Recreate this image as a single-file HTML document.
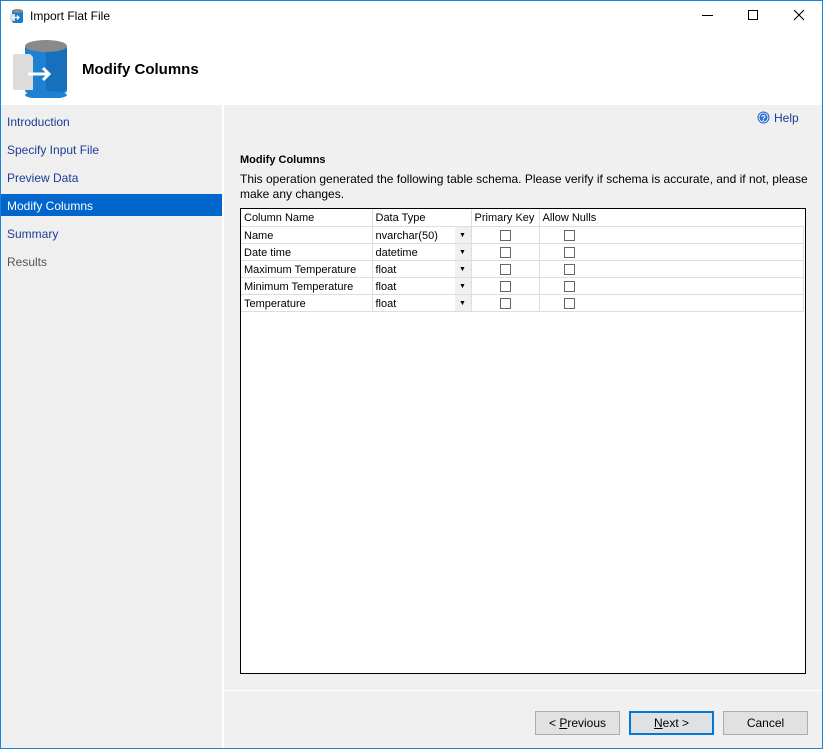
<!DOCTYPE html>
<html><head><style>
*{margin:0;padding:0;box-sizing:border-box}
body{width:823px;height:749px;position:relative;background:#fff;font-family:"Liberation Sans",sans-serif;font-size:12px;color:#000;overflow:hidden}
.win{position:absolute;left:0;top:0;width:823px;height:749px;border:1px solid #1883d7}
.abs{position:absolute}
.nav{left:1px;top:105px;width:221px;height:643px;background:#efefef}
.nav div{position:absolute;left:6px;color:#1e3c96;font-size:12px}
.main{left:224px;top:105px;width:598px;height:643px;background:#f0f0f0}
table{border-collapse:collapse;font-size:11px}
td{height:17px;border-right:1px solid #ddd;border-bottom:1px solid #ddd;padding:2px 3px 0;white-space:nowrap;background:#fff;vertical-align:middle;position:relative}
.cb{display:inline-block;width:11px;height:11px;border:1px solid #666;vertical-align:middle}
.dd{position:absolute;right:0;top:0;font-size:7px;width:16px;height:16px;background:#f0f0f0;text-align:center;line-height:17px}
.btn{position:absolute;top:711px;height:24px;border:1px solid #adadad;background:#e1e1e1;text-align:center;line-height:22px;font-size:12px}
</style></head><body>
<div class="win"></div>
<svg class="abs" style="left:9px;top:8px" width="16" height="16"><rect x="3" y="2" width="11" height="13" rx="2" fill="#1b7ccc"/><ellipse cx="8.5" cy="3" rx="5.5" ry="2" fill="#888"/><rect x="1" y="6" width="5" height="7" fill="#ddd"/><path d="M3 9.5h7M8 7.5l2 2-2 2" stroke="#fff" stroke-width="1.3" fill="none"/></svg>
<div class="abs" style="left:30px;top:9px;font-size:12px">Import Flat File</div>
<div class="abs" style="left:702px;top:15px;width:11px;height:1px;background:#000"></div>
<div class="abs" style="left:748px;top:10px;width:10px;height:10px;border:1px solid #000"></div>
<svg class="abs" style="left:793px;top:9px" width="12" height="12"><path d="M1 1L11 11M11 1L1 11" stroke="#000" stroke-width="1.1"/></svg>
<svg class="abs" style="left:10px;top:38px" width="60" height="60"><rect x="15" y="7" width="42" height="48" rx="3" fill="#1e80d0"/><path d="M36 10h21v42q-8 4-21 3z" fill="#1870bd"/><ellipse cx="36" cy="57" rx="21" ry="4" fill="#1e80d0"/><ellipse cx="36" cy="8" rx="21" ry="6" fill="#8a8a8a"/><path d="M3 16h17l3 3v33H3z" fill="#dcdcdc"/><path d="M18 36h21M33 30l6 6-6 6" stroke="#fff" stroke-width="3" fill="none"/></svg>
<div class="abs" style="left:82px;top:61px;font-size:15px;font-weight:bold">Modify Columns</div>
<div class="abs nav">
<div style="top:10px">Introduction</div>
<div style="top:38px">Specify Input File</div>
<div style="top:66px">Preview Data</div>
<div style="top:89px;left:0;width:221px;height:22px;background:#0066cc"></div>
<div style="top:94px;color:#fff">Modify Columns</div>
<div style="top:122px">Summary</div>
<div style="top:150px;color:#555">Results</div>
</div>
<div class="abs main"></div>
<div class="abs" style="left:224px;top:690px;width:598px;height:1px;background:#fff"></div>
<svg class="abs" style="left:757px;top:111px" width="13" height="13"><circle cx="6.5" cy="6.5" r="6" fill="#2a6fd0"/><circle cx="6.5" cy="6.5" r="4.5" fill="none" stroke="#fff" stroke-width="0.8"/><text x="6.5" y="10" font-size="8" font-weight="bold" fill="#fff" text-anchor="middle" font-family="Liberation Sans">?</text></svg>
<div class="abs" style="left:774px;top:111px;color:#1e3c96">Help</div>
<div class="abs" style="left:240px;top:154px;font-weight:bold;font-size:11px">Modify Columns</div>
<div class="abs" style="left:240px;top:172px;font-size:12px;line-height:15px;width:570px">This operation generated the following table schema. Please verify if schema is accurate, and if not, please make any changes.</div>
<div class="abs" style="left:240px;top:208px;width:566px;height:466px;border:1px solid #000;background:#fff">
<table>
<tr><td style="width:131px">Column Name</td><td style="width:99px">Data Type</td><td style="width:68px">Primary Key</td><td style="width:264px;border-right:none">Allow Nulls</td></tr>
<tr><td>Name</td><td>nvarchar(50)<span class="dd">▼</span></td><td style="text-align:center"><span class="cb"></span></td><td style="padding-left:24px"><span class="cb"></span></td></tr>
<tr><td>Date time</td><td>datetime<span class="dd">▼</span></td><td style="text-align:center"><span class="cb"></span></td><td style="padding-left:24px"><span class="cb"></span></td></tr>
<tr><td>Maximum Temperature</td><td>float<span class="dd">▼</span></td><td style="text-align:center"><span class="cb"></span></td><td style="padding-left:24px"><span class="cb"></span></td></tr>
<tr><td>Minimum Temperature</td><td>float<span class="dd">▼</span></td><td style="text-align:center"><span class="cb"></span></td><td style="padding-left:24px"><span class="cb"></span></td></tr>
<tr><td>Temperature</td><td>float<span class="dd">▼</span></td><td style="text-align:center"><span class="cb"></span></td><td style="padding-left:24px"><span class="cb"></span></td></tr>
</table>
</div>
<div class="btn" style="left:535px;width:85px">&lt; <u>P</u>revious</div>
<div class="btn" style="left:629px;width:85px;border:2px solid #0078d7;line-height:20px"><u>N</u>ext &gt;</div>
<div class="btn" style="left:723px;width:85px">Cancel</div>
</body></html>
